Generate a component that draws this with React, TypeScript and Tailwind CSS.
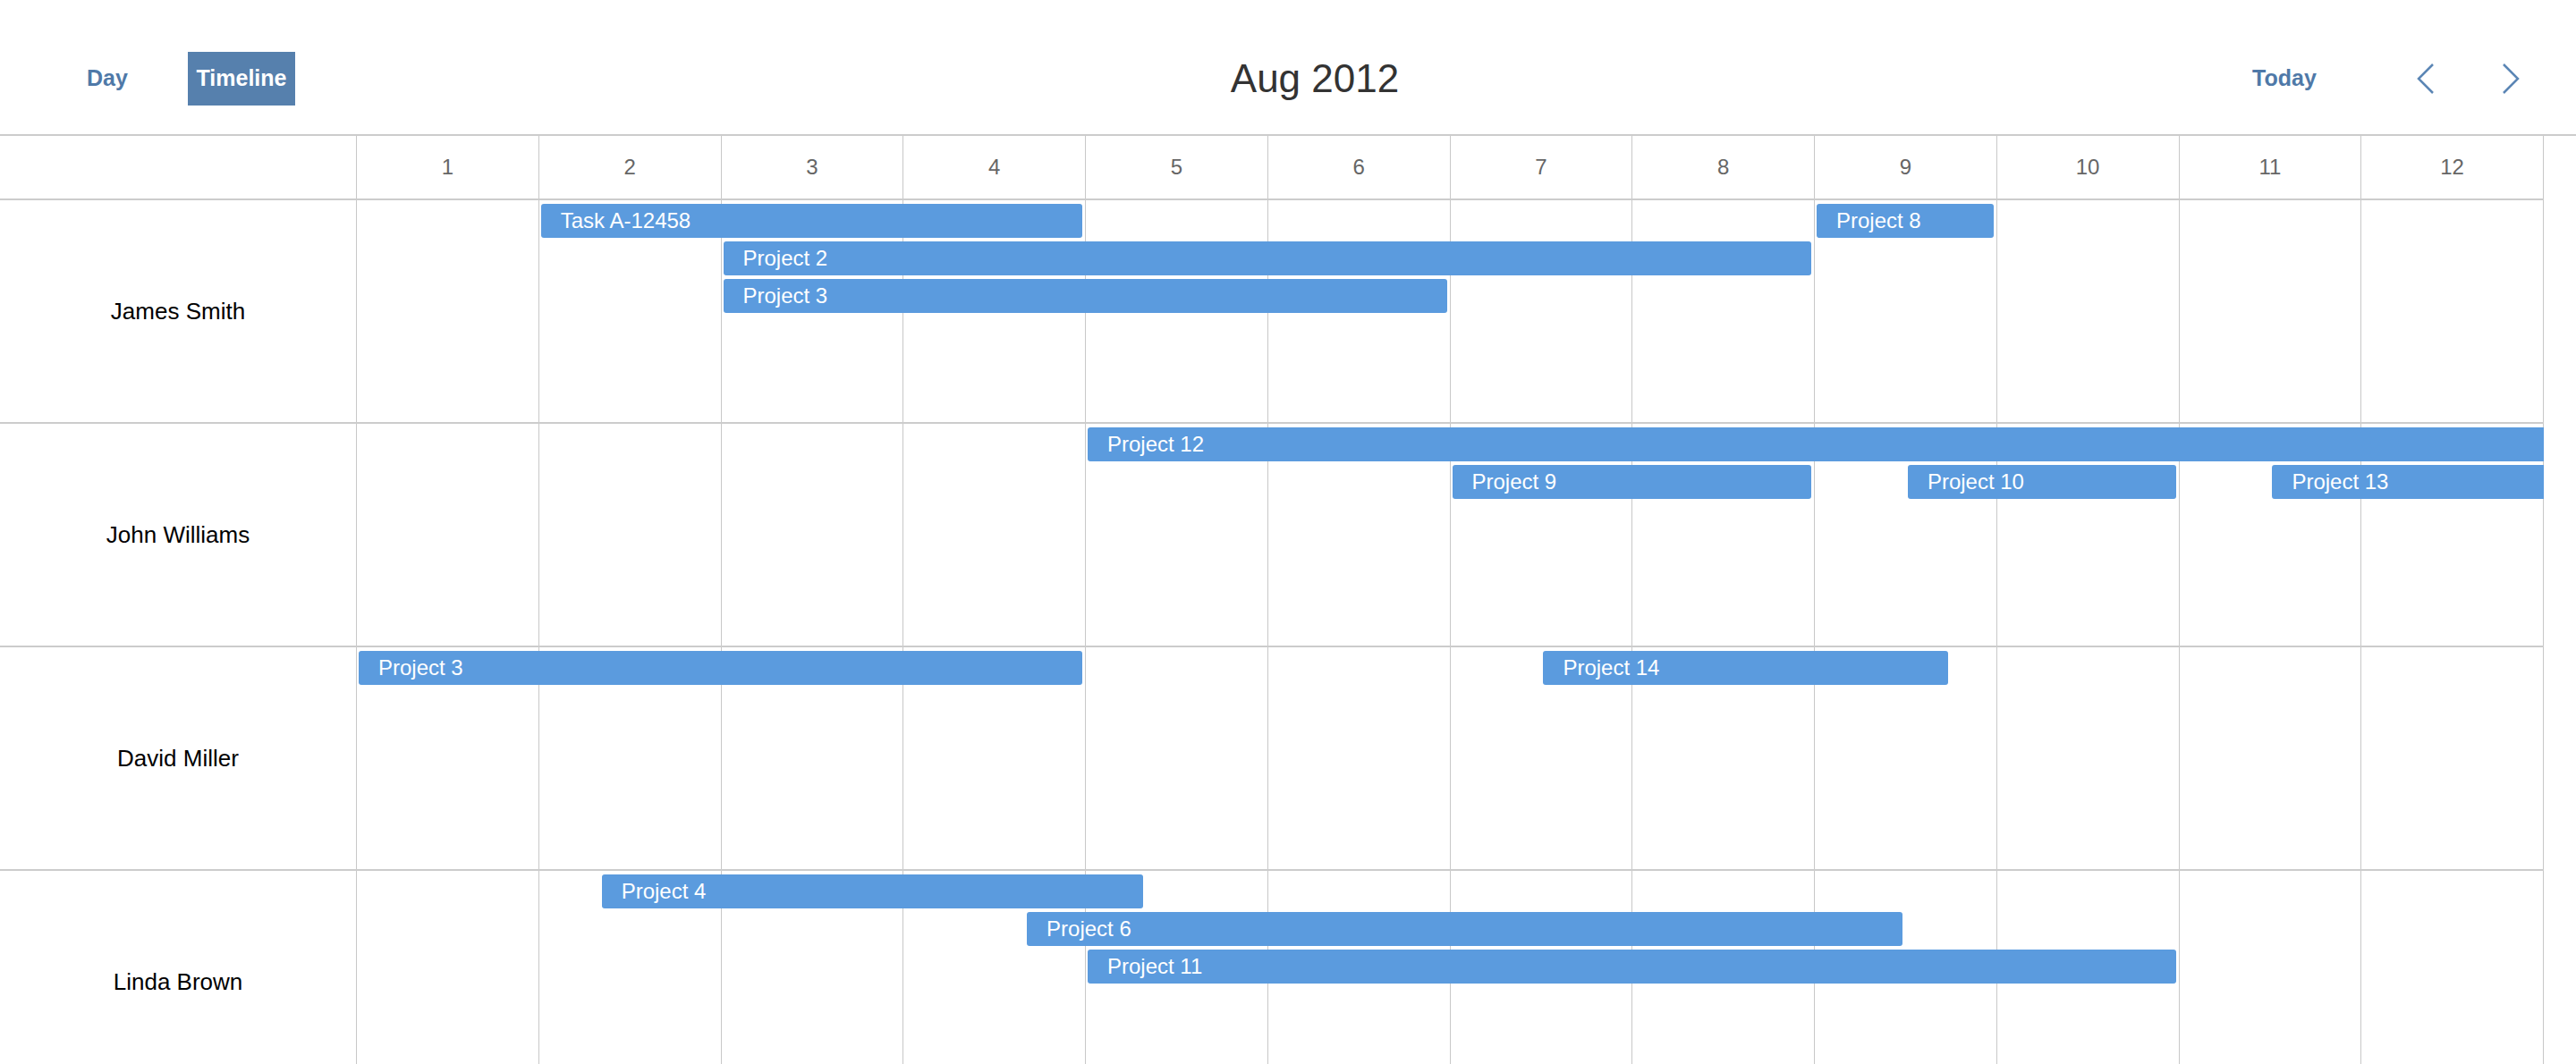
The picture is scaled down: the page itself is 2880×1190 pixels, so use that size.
import React from 'react'

type Bar = { label: string; start: number; end: number; lane: number }
type Row = { name: string; bars: Bar[] }

const COL_W = (2844 - 399) / 12

const rows: Row[] = [
  {
    name: 'James Smith',
    bars: [
      { label: 'Task A-12458', start: 1, end: 4, lane: 0 },
      { label: 'Project 8', start: 8, end: 9, lane: 0 },
      { label: 'Project 2', start: 2, end: 8, lane: 1 },
      { label: 'Project 3', start: 2, end: 6, lane: 2 },
    ],
  },
  {
    name: 'John Williams',
    bars: [
      { label: 'Project 12', start: 4, end: 13, lane: 0 },
      { label: 'Project 9', start: 6, end: 8, lane: 1 },
      { label: 'Project 10', start: 8.5, end: 10, lane: 1 },
      { label: 'Project 13', start: 10.5, end: 13, lane: 1 },
    ],
  },
  {
    name: 'David Miller',
    bars: [
      { label: 'Project 3', start: 0, end: 4, lane: 0 },
      { label: 'Project 14', start: 6.5, end: 8.75, lane: 0 },
    ],
  },
  {
    name: 'Linda Brown',
    bars: [
      { label: 'Project 4', start: 4 / 3, end: 13 / 3, lane: 0 },
      { label: 'Project 6', start: 11 / 3, end: 8.5, lane: 1 },
      { label: 'Project 11', start: 4, end: 10, lane: 2 },
    ],
  },
]

const days = Array.from({ length: 12 }, (_, i) => i + 1)

function Chevron({ dir }: { dir: 'left' | 'right' }) {
  return (
    <svg width="20" height="34" viewBox="0 0 20 34" fill="none" stroke="#5b86b5" strokeWidth={2.5}>
      {dir === 'left' ? <polyline points="18,1 2,17 18,33" /> : <polyline points="2,1 18,17 2,33" />}
    </svg>
  )
}

function DayCells() {
  return (
    <div className="absolute inset-0 grid grid-cols-12">
      {days.map((d) => (
        <div key={d} className="border-r border-[#c8c8c8]" />
      ))}
    </div>
  )
}

export default function App() {
  return (
    <div className="h-[1190px] overflow-hidden bg-white font-['Liberation_Sans',Arial,sans-serif]">
      {/* Barra superior */}
      <header className="flex h-[152px] items-center border-b-2 border-[#cccccc] pt-[26px]">
        <div className="flex w-[700px] items-center gap-[30px] pl-[60px]">
          <button className="h-[60px] w-[120px] text-[25px] font-bold text-[#4f79a8]">Day</button>
          <button className="h-[60px] w-[120px] bg-[#5680ad] text-[25px] font-bold text-white">Timeline</button>
        </div>
        <div className="flex-1 text-center text-[44px] text-[#333]">Aug 2012</div>
        <div className="flex w-[640px] items-center justify-end pr-[43px]">
          <button className="h-[60px] w-[120px] text-[25px] font-bold text-[#4f79a8]">Today</button>
          <button className="ml-[68px] flex h-[60px] w-[60px] items-center justify-center">
            <Chevron dir="left" />
          </button>
          <button className="ml-[35px] flex h-[60px] w-[60px] items-center justify-center">
            <Chevron dir="right" />
          </button>
        </div>
      </header>

      <div className="w-[2844px]">
        {/* Cabecera de días */}
        <div className="flex h-[72px] border-b-2 border-[#cccccc]">
          <div className="w-[399px] shrink-0 border-r border-[#c8c8c8]" />
          <div className="grid flex-1 grid-cols-12">
            {days.map((d) => (
              <div
                key={d}
                className="flex items-center justify-center border-r border-[#c8c8c8] text-[24px] text-[#666]"
              >
                {d}
              </div>
            ))}
          </div>
        </div>

        {/* Filas */}
        {rows.map((row) => (
          <div key={row.name} className="flex h-[250px] border-b-2 border-[#cccccc]">
            <div className="flex w-[399px] shrink-0 items-center justify-center border-r border-[#c8c8c8] text-[26px] text-black">
              {row.name}
            </div>
            <div className="relative flex-1 overflow-hidden">
              <DayCells />
              {row.bars.map((b) => (
                <div
                  key={b.label + b.start}
                  className="absolute flex h-[38px] items-center rounded-[3px] bg-[#5b9bde] pl-[22px] text-[24px] whitespace-nowrap text-white"
                  style={{
                    left: b.start * COL_W + 2,
                    width: (b.end - b.start) * COL_W - 6,
                    top: 4 + b.lane * 42,
                  }}
                >
                  {b.label}
                </div>
              ))}
            </div>
          </div>
        ))}
      </div>
    </div>
  )
}
